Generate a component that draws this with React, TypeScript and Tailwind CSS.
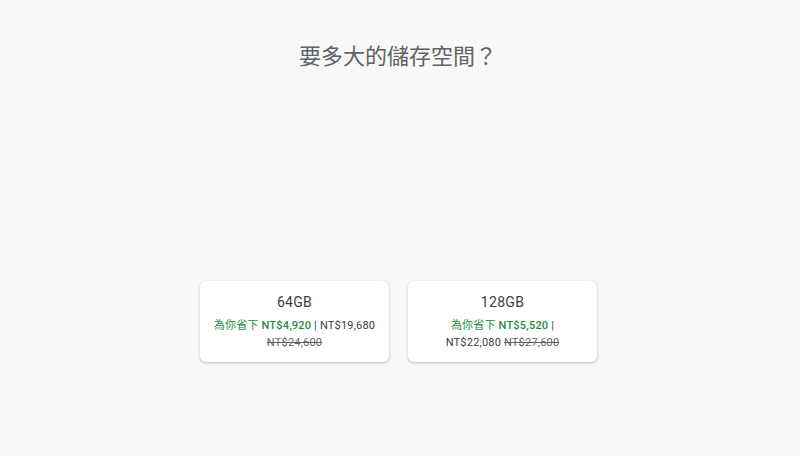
import React from "react";

const font = { fontFamily: 'Roboto, "Noto Sans CJK TC", sans-serif' };

function Card({ size, save, price, orig, wrap }: { size: string; save: string; price: string; orig: string; wrap?: boolean }) {
  return (
    <div className="w-[189px] h-[81px] bg-white rounded-[6px] shadow-[0_1px_3px_rgba(0,0,0,0.25)] px-3 pt-[11px] text-center">
      <div className="text-[14px] leading-[20px] text-[#3c4043] tracking-[0.3px]">{size}</div>
      <div className="mt-[5px] text-[11px] leading-[17px] text-[#3c4043] tracking-[0.2px]">
        <span className="text-[#1e8e3e]">為你省下 <span className="font-medium">{save}</span></span> |{wrap ? <br /> : " "}{price}{" "}
        {!wrap && <br />}
        <span className="line-through text-[#5f6368]">{orig}</span>
      </div>
    </div>
  );
}

export default function App() {
  return (
    <div className="w-[800px] h-[456px] bg-[#f8f8f8] flex flex-col items-center" style={font}>
      <h1 className="mt-[43px] mr-[4px] text-[22px] leading-[28px] text-[#5f6368] font-normal">要多大的儲存空間？</h1>
      <div className="mt-[210px] mr-[3px] flex gap-[19px]">
        <Card size="64GB" save="NT$4,920" price="NT$19,680" orig="NT$24,600" />
        <Card size="128GB" save="NT$5,520" price="NT$22,080" orig="NT$27,600" wrap />
      </div>
    </div>
  );
}
